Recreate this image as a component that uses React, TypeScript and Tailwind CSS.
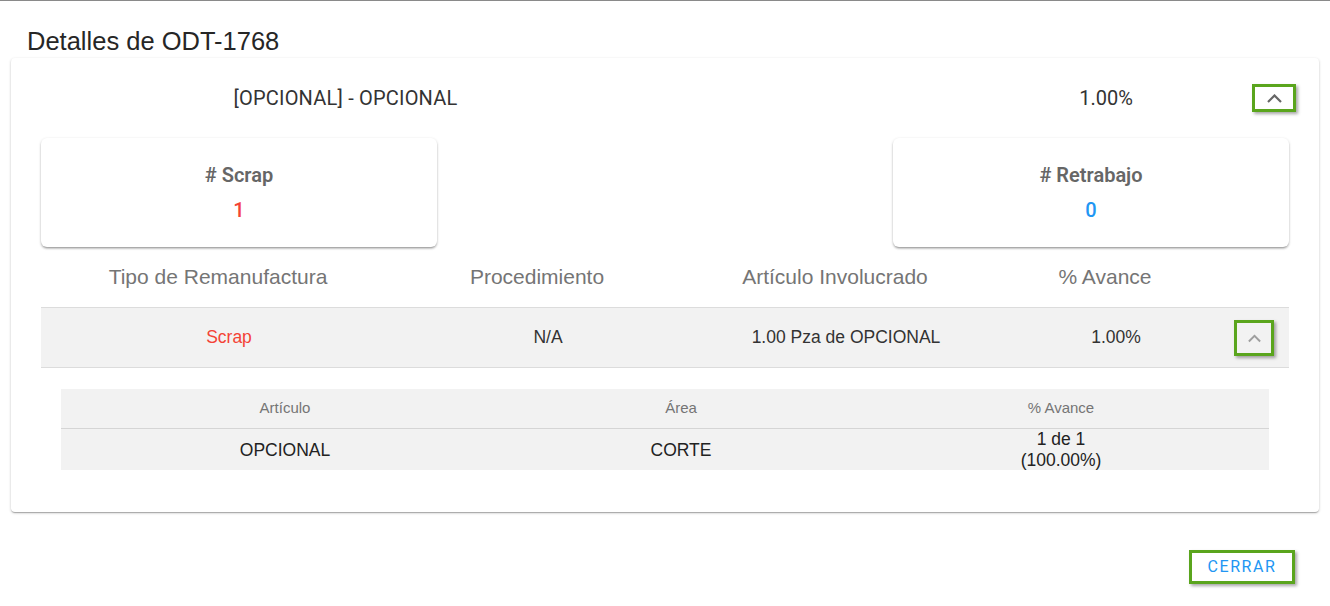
import React from "react";

const Chevron = ({ color, w = 15 }: { color: string; w?: number }) => (
  <svg width={w} height={9} viewBox="0 0 15 9" fill="none">
    <polyline points="1,8 7.5,1.5 14,8" stroke={color} strokeWidth="2.2" />
  </svg>
);

export default function App() {
  return (
    <div className="w-[1330px] h-[606px] bg-white border-t border-[#8a8a8a] overflow-hidden">
      <div className="pl-[27px] pt-[26px] text-[25.5px] leading-[29px] text-[#262626] font-['Liberation_Sans',Arial,sans-serif]">
        Detalles de ODT-1768
      </div>
      <div className="mx-[11px] mt-[2px] rounded-[4px] bg-white shadow-[0_1px_3px_rgba(0,0,0,0.2),0_1px_1px_rgba(0,0,0,0.14),0_2px_1px_-1px_rgba(0,0,0,0.12)] px-[30px] pt-[26px] pb-[42px] font-['Roboto',sans-serif]">
        <div className="flex items-center h-[28px]">
          <div className="shrink-0 w-[609px] text-center text-[20px] text-[#333] tracking-[0.01em]">
            [OPCIONAL] - OPCIONAL
          </div>
          <div className="shrink-0 ml-[406px] w-[100px] text-center text-[20px] text-[#333]">1.00%</div>
          <div className="shrink-0 ml-[96px] w-[44px] h-[28px] border-[3px] border-[#5aa51d] shadow-[2px_2px_3px_rgba(0,0,0,0.35)] flex items-center justify-center">
            <Chevron color="#666666" />
          </div>
        </div>
        <div className="flex justify-between mt-[26px]">
          {[
            { t: "# Scrap", v: "1", c: "text-[#f44336]" },
            { t: "# Retrabajo", v: "0", c: "text-[#2196f3]" },
          ].map((k) => (
            <div
              key={k.t}
              className="w-[396px] h-[109px] rounded-[6px] bg-white shadow-[0_1px_3px_rgba(0,0,0,0.2),0_2px_2px_rgba(0,0,0,0.14),0_3px_1px_-2px_rgba(0,0,0,0.12)] flex flex-col items-center"
            >
              <div className="mt-[25px] text-[20px] leading-[24px] font-semibold text-[#666]">{k.t}</div>
              <div className={`mt-[11px] text-[20px] leading-[24px] font-medium ${k.c}`}>{k.v}</div>
            </div>
          ))}
        </div>
        <div className="grid grid-cols-[354px_284px_312px_228px] h-[60px] items-center text-center text-[21px] text-[#757575] font-['Liberation_Sans',Arial,sans-serif]">
          <div>Tipo de Remanufactura</div>
          <div>Procedimiento</div>
          <div>Artículo Involucrado</div>
          <div>% Avance</div>
        </div>
        <div className="grid grid-cols-[376px_262px_334px_206px_70px] h-[61px] items-center text-center bg-[#f2f2f2] border-y border-[#dcdcdc] text-[17.5px] text-[#333] font-['Liberation_Sans',Arial,sans-serif]">
          <div className="text-[#f44336]">Scrap</div>
          <div>N/A</div>
          <div>1.00 Pza de OPCIONAL</div>
          <div>1.00%</div>
          <div className="flex justify-center">
            <div className="w-[40px] h-[36px] mt-[1px] border-[3px] border-[#5aa51d] shadow-[2px_2px_3px_rgba(0,0,0,0.35)] flex items-center justify-center">
              <Chevron color="#9e9e9e" w={13} />
            </div>
          </div>
        </div>
        <div className="mx-[20px] mt-[21px] bg-[#f2f2f2] font-['Liberation_Sans',Arial,sans-serif]">
          <div className="grid grid-cols-[448px_344px_416px] h-[40px] items-center text-center text-[15px] text-[#757575] border-b border-[#d5d5d5]">
            <div>Artículo</div>
            <div>Área</div>
            <div>% Avance</div>
          </div>
          <div className="grid grid-cols-[448px_344px_416px] h-[41px] items-center text-center text-[17.5px] text-[#222] leading-[21px]">
            <div>OPCIONAL</div>
            <div>CORTE</div>
            <div>
              1 de 1
              <br />
              (100.00%)
            </div>
          </div>
        </div>
      </div>
      <div className="flex justify-end pr-[35px] mt-[38px]">
        <div className="w-[106px] h-[34px] border-[3px] border-[#5aa51d] shadow-[2px_2px_3px_rgba(0,0,0,0.35)] flex items-center justify-center text-[16px] tracking-[0.1em] text-[#2196f3] font-['Roboto',sans-serif]">
          CERRAR
        </div>
      </div>
    </div>
  );
}
